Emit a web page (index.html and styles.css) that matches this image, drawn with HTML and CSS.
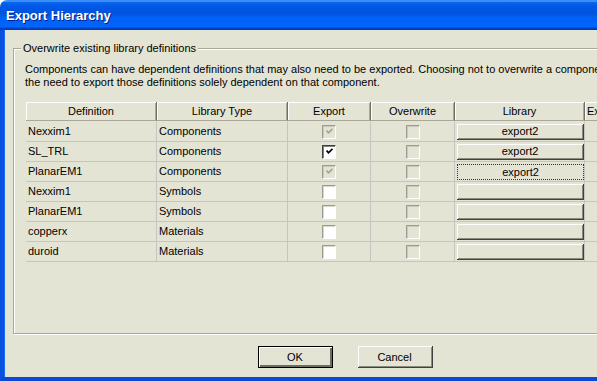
FILE: index.html
```html
<!DOCTYPE html>
<html lang="en">
<head>
    <meta charset="UTF-8">
    <title>Export Hierarchy</title>
    <link rel="stylesheet" href="styles.css">
</head>
<body>

    <div class="window">
        <div class="titlebar">Export Hierarchy</div>

        <div class="client">
            <fieldset class="group">
                <legend>Overwrite existing library definitions</legend>

                <p class="note">Components can have dependent definitions that may also need to be exported. Choosing not to overwrite a component<br>the need to export those definitions solely dependent on that component.</p>

                <!-- definitions list -->
                <div class="grid">
                    <div class="head">Definition</div>
                    <div class="head">Library Type</div>
                    <div class="head">Export</div>
                    <div class="head">Overwrite</div>
                    <div class="head">Library</div>
                    <div class="head head-left">Export Path</div>

                    <div class="cell">Nexxim1</div>
                    <div class="cell">Components</div>
                    <div class="cell mid"><span class="box off"><svg class="tick" viewBox="0 0 7 7"><polyline points="0.5,2.5 2.5,4.8 6.5,0.8"/></svg></span></div>
                    <div class="cell mid"><span class="box off"></span></div>
                    <div class="cell lib"><span class="libbtn">export2</span></div>
                    <div class="cell"></div>

                    <div class="cell">SL_TRL</div>
                    <div class="cell">Components</div>
                    <div class="cell mid"><span class="box on"><svg class="tick" viewBox="0 0 7 7"><polyline points="0.5,2.5 2.5,4.8 6.5,0.8"/></svg></span></div>
                    <div class="cell mid"><span class="box off"></span></div>
                    <div class="cell lib"><span class="libbtn">export2</span></div>
                    <div class="cell"></div>

                    <div class="cell">PlanarEM1</div>
                    <div class="cell">Components</div>
                    <div class="cell mid"><span class="box off"><svg class="tick" viewBox="0 0 7 7"><polyline points="0.5,2.5 2.5,4.8 6.5,0.8"/></svg></span></div>
                    <div class="cell mid"><span class="box off"></span></div>
                    <div class="cell lib"><span class="libbtn focus">export2</span></div>
                    <div class="cell"></div>

                    <div class="cell">Nexxim1</div>
                    <div class="cell">Symbols</div>
                    <div class="cell mid"><span class="box"></span></div>
                    <div class="cell mid"><span class="box off"></span></div>
                    <div class="cell lib"><span class="libbtn"></span></div>
                    <div class="cell"></div>

                    <div class="cell">PlanarEM1</div>
                    <div class="cell">Symbols</div>
                    <div class="cell mid"><span class="box"></span></div>
                    <div class="cell mid"><span class="box off"></span></div>
                    <div class="cell lib"><span class="libbtn"></span></div>
                    <div class="cell"></div>

                    <div class="cell">copperx</div>
                    <div class="cell">Materials</div>
                    <div class="cell mid"><span class="box"></span></div>
                    <div class="cell mid"><span class="box off"></span></div>
                    <div class="cell lib"><span class="libbtn"></span></div>
                    <div class="cell"></div>

                    <div class="cell">duroid</div>
                    <div class="cell">Materials</div>
                    <div class="cell mid"><span class="box"></span></div>
                    <div class="cell mid"><span class="box off"></span></div>
                    <div class="cell lib"><span class="libbtn"></span></div>
                    <div class="cell"></div>
                </div>
            </fieldset>

            <div class="actions">
                <button type="button" class="btn default">OK</button>
                <button type="button" class="btn">Cancel</button>
            </div>
        </div>
    </div>

</body>
</html>
```

FILE: styles.css
```css
* {
    margin: 0;
    padding: 0;
    box-sizing: border-box;
}

html, body {
    overflow: hidden;
}

body {
    background: #cdd6f0;
    font-family: "Liberation Sans", Arial, sans-serif;
    font-size: 11px;
    line-height: 13px;
    color: #000;
    height: 382px;
}

.window {
    width: 690px;
    background: #fff;
}

/* title bar, luna blue */
.titlebar {
    height: 30px;
    border-top-left-radius: 7px;
    padding: 7px 0 0 6px;
    color: #fff;
    font-family: "Liberation Sans", Arial, sans-serif;
    font-weight: bold;
    font-size: 13px;
    line-height: 17px;
    text-shadow: 1px 1px 0 #0a1e8c;
    background: linear-gradient(to bottom,
        #3c8ef7 0, #3c8ef7 2px,
        #0b66ee 2px, #0058e6 6px,
        #0054dc 14px, #0061f4 17px,
        #0066fe 27px, #0046c8 28px, #0036b4 30px);
}

.client {
    background: #e4e4d4;
    height: 351px;
    border-left: 4px solid #0a50e0;
    border-bottom: 4px solid #0a48d8;
    box-shadow: inset 1px 0 0 #1b6af2;
    padding: 12px 0 10px 9px;
}

.group {
    width: 664px;
    border: 1px solid #a8a79a;
    box-shadow: inset 1px 1px 0 #fff, 1px 1px 0 #fff;
    padding: 8px 11px 71px 11px;
}

.group legend {
    background: #e4e4d4;
    margin-left: -4px;
    padding: 0 2px;
}

.note {
    white-space: nowrap;
}

.grid {
    margin-top: 13px;
    margin-left: 1px;
    display: grid;
    grid-template-columns: 131px 131px 83px 84px 130px 120px;
    grid-auto-rows: 20px;
}

.head {
    height: 19px;
    display: flex;
    align-items: center;
    justify-content: center;
    border-right: 1px solid #716f64;
    border-bottom: 1px solid #aca899;
    box-shadow: inset 1px 1px 0 #fff, inset -1px 0 0 #aca899;
}

.head-left {
    justify-content: flex-start;
    padding-left: 2px;
}

.cell {
    display: flex;
    align-items: center;
    padding-left: 2px;
    border-right: 1px solid #c6c6c0;
    border-bottom: 1px solid #c6c6c0;
    white-space: nowrap;
}

.cell.mid {
    justify-content: center;
    padding-left: 0;
}

.cell.lib {
    padding-left: 2px;
    padding-top: 1px;
}

/* checkboxes */
.box {
    width: 14px;
    height: 14px;
    display: flex;
    align-items: center;
    justify-content: center;
    background: #fff;
    border: 1px solid;
    border-color: #9d9c91 #fff #fff #9d9c91;
    box-shadow: inset 1px 1px 0 #d8d7cc;
}

.box.on {
    border-color: #404040 #fff #fff #404040;
    box-shadow: inset 1px 1px 0 #808080;
}

.box.off {
    background: #e4e4d4;
    box-shadow: inset 1px 1px 0 #c9c8bb;
}

.tick {
    width: 7px;
    height: 7px;
    fill: none;
    stroke: #000;
    stroke-width: 1.8;
}

.box.off .tick {
    stroke: #a6a595;
}

.libbtn {
    width: 127px;
    height: 16px;
    display: flex;
    align-items: center;
    justify-content: center;
    background: #e4e4d4;
    border-right: 1px solid #404040;
    border-bottom: 1px solid #404040;
    box-shadow: inset 1px 1px 0 #fff, inset -1px -1px 0 #8c8b80;
}

.libbtn.focus {
    border: 1px dotted #333;
    box-shadow: none;
}

.actions {
    display: flex;
    justify-content: center;
    gap: 25px;
    margin-top: 12px;
    margin-left: -13px;
}

.btn {
    width: 75px;
    height: 22px;
    font-family: "Liberation Sans", Arial, sans-serif;
    font-size: 11px;
    background: #e4e4d4;
    border: none;
    border-right: 1px solid #404040;
    border-bottom: 1px solid #404040;
    box-shadow: inset 1px 1px 0 #fff, inset -1px -1px 0 #8c8b80;
    color: #000;
}

.btn.default {
    border: 1px solid #000;
    box-shadow: inset 1px 1px 0 #fff, inset -2px -2px 0 #6d6c62;
}
```
